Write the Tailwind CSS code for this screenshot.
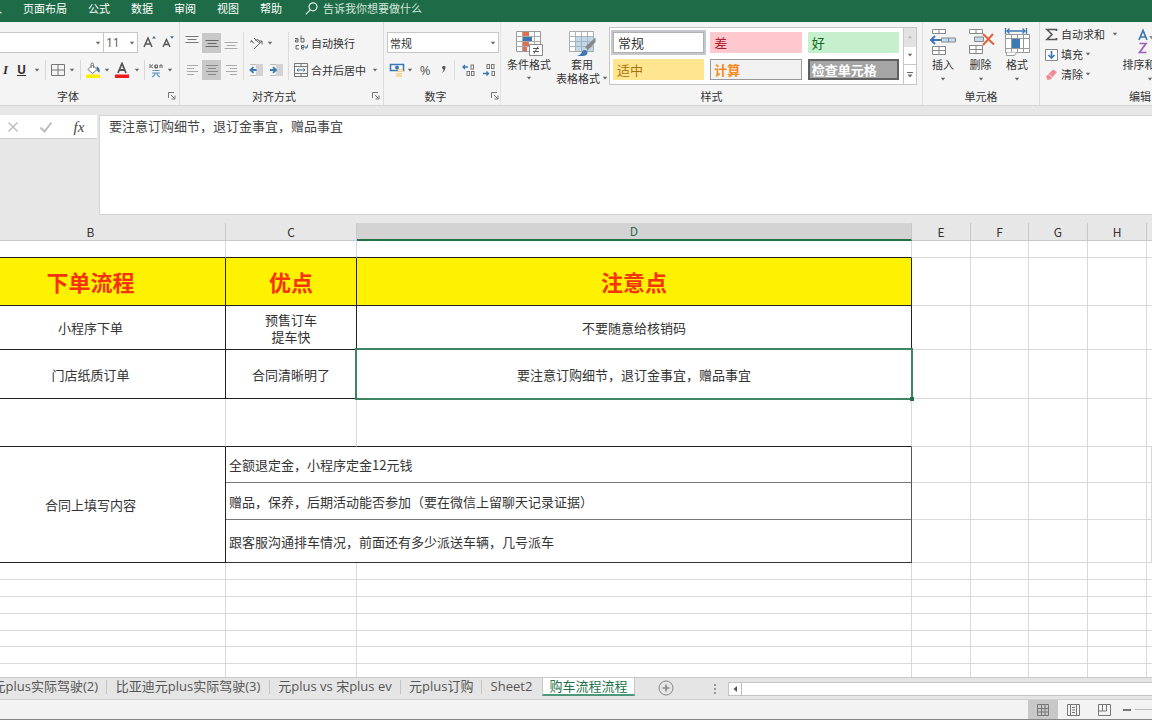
<!DOCTYPE html>
<html lang="zh-CN">
<head>
<meta charset="utf-8">
<title>购车流程流程</title>
<script src="https://cdn.jsdelivr.net/npm/@tailwindcss/browser@4"></script>
</head>
<body class="flex h-screen flex-col overflow-hidden bg-[#e7e7e7] font-['Noto_Sans_CJK_SC',sans-serif] text-[11px] leading-4 text-[#333]">

<svg class="hidden">
  <symbol id="caret" viewBox="0 0 6 4"><path d="M.8.8h4.4L3 3.4z" fill="#666"/></symbol>
  <symbol id="launcher" viewBox="0 0 8 8"><path d="M.5 6V.5H6M3 3l3.5 3.5M7 3.5V7H3.5" fill="none" stroke="#777"/></symbol>
</svg>

<!-- Menu tabs -->
<nav class="flex h-[22px] shrink-0 items-start gap-[21px] overflow-hidden bg-[#1e6c47] text-white">
  <a href="#" class="flex w-[2px] justify-end overflow-hidden whitespace-nowrap">插入</a>
  <a href="#">页面布局</a>
  <a href="#">公式</a>
  <a href="#">数据</a>
  <a href="#">审阅</a>
  <a href="#">视图</a>
  <a href="#">帮助</a>
  <button class="flex items-center gap-[5px] pl-[2px] text-[#d5e6dc]">
    <svg class="size-[13px]" viewBox="0 0 13 13" fill="none" stroke="#e4efe9" stroke-width="1.2"><circle cx="8" cy="4.8" r="4"/><path d="M5.2 7.8L.8 12.4"/></svg>
    <span>告诉我你想要做什么</span>
  </button>
</nav>

<!-- Ribbon -->
<header class="flex h-[84px] shrink-0 overflow-hidden border-b border-[#d6d6d6] bg-[#f4f4f4]">

  <section class="flex w-[180px] shrink-0 flex-col border-r border-[#dcdcdc] pt-[10px]" aria-label="字体">
    <div class="flex h-[21px] items-center">
      <select aria-label="字体名称" class="h-[21px] w-[104px] appearance-none border border-l-0 border-[#c6c6c6] bg-white"><option></option></select>
      <svg class="-ml-[9px] h-1 w-1.5"><use href="#caret"/></svg>
      <select aria-label="字号" class="ml-[2px] h-[21px] w-[35px] appearance-none border border-[#c6c6c6] bg-white px-[2px] font-['Open_Sans',sans-serif] text-[12px] text-[#555]"><option>11</option></select>
      <svg class="-ml-[9px] h-1 w-1.5"><use href="#caret"/></svg>
      <button aria-label="增大字号" class="ml-[6px] w-[18px]"><svg class="h-4 w-[18px]" viewBox="0 0 18 16" fill="none" stroke="#555" stroke-width="1.5"><path d="M3 12L7 3 11 12M4.500 9h5"/><path d="M11 3.500L13 1l2 2.500z" fill="#4a6b8a" stroke="none"/></svg></button>
      <button aria-label="减小字号" class="w-[18px]"><svg class="h-4 w-[18px]" viewBox="0 0 18 16" fill="none" stroke="#555" stroke-width="1.400"><path d="M4 12L7.500 4.500 11 12M5.200 9.500h4.600"/><path d="M11 1.200h4L13 3.700z" fill="#4a6b8a" stroke="none"/></svg></button>
    </div>
    <div class="mt-[7px] flex h-[20px] items-center">
      <button class="w-[11px] font-['Liberation_Serif',serif] text-[13px] font-bold italic">I</button>
      <button class="w-[21px] font-['Open_Sans',sans-serif] text-[12px] font-bold underline">U</button>
      <button aria-label="下划线选项" class="flex w-[10px] justify-center"><svg class="h-1 w-1.5"><use href="#caret"/></svg></button>
      <span class="mx-[3px] h-5 w-px bg-[#d8d8d8]"></span>
      <button aria-label="边框" class="flex w-[18px] justify-center"><svg class="size-[14px]" viewBox="0 0 14 14" fill="none" stroke="#777"><path d="M.5 1.500h13v11H.5zM7 1.500v11M.5 7h13"/></svg></button>
      <button aria-label="边框选项" class="flex w-[10px] justify-center"><svg class="h-1 w-1.5"><use href="#caret"/></svg></button>
      <span class="mx-[3px] h-5 w-px bg-[#d8d8d8]"></span>
      <button aria-label="填充颜色" class="flex w-[18px] justify-center"><svg class="size-4" viewBox="0 0 16 16" fill="none"><path d="M3 7.500L7.500 3l4.500 4.500-4.500 4-4.500-4z" fill="#fff" stroke="#777"/><path d="M6 6V2.500Q6 1 7.200 1t1.300 1.500V6" stroke="#777"/><path d="M11.500 4.500q4 1 3 6-3-.500-3-6z" fill="#44749f"/><path d="M1 12.500h14V16H1z" fill="#fff000"/></svg></button>
      <button aria-label="填充颜色选项" class="flex w-[10px] justify-center"><svg class="h-1 w-1.5"><use href="#caret"/></svg></button>
      <button aria-label="字体颜色" class="flex w-[20px] justify-center"><svg class="size-4" viewBox="0 0 16 16" fill="none"><path d="M4 11L8 1.500 12 11M5.500 8h5" stroke="#555" stroke-width="1.800"/><path d="M1 12.500h14V16H1z" fill="#f01818"/></svg></button>
      <button aria-label="字体颜色选项" class="flex w-[10px] justify-center"><svg class="h-1 w-1.5"><use href="#caret"/></svg></button>
      <span class="mx-[2px] h-5 w-px bg-[#d8d8d8]"></span>
      <button aria-label="拼音指南" class="flex w-[18px] justify-center"><svg class="size-4" viewBox="0 0 16 16" fill="none"><path d="M2 2v4M5 2.500L2.500 4.500 5 6M7 5.500h2.500V3H7zM7 3v3h2.500M12 6V3h2v3" stroke="#666"/><path d="M4.500 8.500h7M4 11h8M7 11q0 3-3 4M9 11q0 3 3 4" stroke="#5b93c4" stroke-width="1.200"/></svg></button>
      <button aria-label="拼音选项" class="flex w-[10px] justify-center"><svg class="h-1 w-1.5"><use href="#caret"/></svg></button>
    </div>
    <div class="mt-[8px] flex items-center pr-[3px]">
      <h2 class="flex-1 pr-[32px] text-center">字体</h2>
      <button aria-label="字体设置"><svg class="size-2"><use href="#launcher"/></svg></button>
    </div>
  </section>

  <section class="flex w-[204px] shrink-0 flex-col border-r border-[#dcdcdc] pt-[10px]" aria-label="对齐方式">
    <div class="flex">
      <div class="flex flex-col gap-[7px] pl-[2px]">
        <div class="flex h-[21px] items-center">
          <button aria-label="顶端对齐" class="flex h-5 w-5 justify-center"><svg class="h-5 w-[14px]" viewBox="0 0 14 20" stroke="#777"><path d="M.5 3.500h13M2.500 6.500h9M.5 9.500h13"/></svg></button>
          <button aria-label="垂直居中" class="flex h-5 w-[19px] justify-center bg-[#c8c8c8]"><svg class="h-5 w-[14px]" viewBox="0 0 14 20" stroke="#666"><path d="M.5 7.500h13M2.500 10.500h9M.5 13.500h13"/></svg></button>
          <button aria-label="底端对齐" class="flex h-5 w-5 justify-center"><svg class="h-5 w-[14px]" viewBox="0 0 14 20" stroke="#aaa"><path d="M.5 9.500h13M2.500 12.500h9M.5 15.500h13"/></svg></button>
        </div>
        <div class="flex h-[20px] items-center">
          <button aria-label="左对齐" class="flex h-5 w-5 justify-center"><svg class="h-5 w-[11px]" viewBox="0 0 11 20" stroke="#aaa"><path d="M0 5.500h11M0 8.500h7M0 11.500h11M0 14.500h7"/></svg></button>
          <button aria-label="居中" class="flex h-5 w-[19px] justify-center bg-[#c8c8c8]"><svg class="h-5 w-[14px]" viewBox="0 0 14 20" stroke="#888"><path d="M1 5.500h12M3 8.500h8M1 11.500h12M3 14.500h8"/></svg></button>
          <button aria-label="右对齐" class="flex h-5 w-5 justify-center"><svg class="h-5 w-[11px]" viewBox="0 0 11 20" stroke="#aaa"><path d="M0 5.500h11M4 8.500h7M0 11.500h11M4 14.500h7"/></svg></button>
        </div>
      </div>
      <span class="mx-[2px] h-12 w-px bg-[#dcdcdc]"></span>
      <div class="flex w-[40px] flex-col gap-[7px]">
        <div class="flex h-[21px] items-center">
          <button aria-label="方向" class="flex w-5 justify-center"><svg class="size-4" viewBox="0 0 16 16" fill="none" stroke="#666"><path d="M3 5l3 3.500M2 7.500q1-2 3-.500M6 3l4 4M7.500 6q1-2.500 3-1t0 3M6 14L14 6M14 6v3.500M14 6h-3"/></svg></button>
          <button aria-label="方向选项" class="flex w-[8px] justify-center"><svg class="h-1 w-1.5"><use href="#caret"/></svg></button>
        </div>
        <div class="flex h-[20px] items-center">
          <button aria-label="减少缩进量" class="flex w-5 justify-center"><svg class="size-[14px]" viewBox="0 0 14 14" fill="none"><path d="M7 1h7v12H7z" fill="#d2d2d2"/><path d="M1 1.500h6M1 12.500h6" stroke="#bbb"/><path d="M7.500 7H2M4.500 4.200L1.500 7l3 2.800" stroke="#3c78b4" stroke-width="1.800"/></svg></button>
          <button aria-label="增加缩进量" class="flex w-5 justify-center"><svg class="size-[14px]" viewBox="0 0 14 14" fill="none"><path d="M7 1h7v12H7z" fill="#d2d2d2"/><path d="M1 1.500h6M1 12.500h6" stroke="#bbb"/><path d="M1 7h5.500M4 4.200L7 7 4 9.800" stroke="#3c78b4" stroke-width="1.800"/></svg></button>
        </div>
      </div>
      <span class="mx-[2px] h-12 w-px bg-[#dcdcdc]"></span>
      <div class="flex flex-1 flex-col gap-[7px] pl-[2px]">
        <button class="flex h-[21px] items-center gap-[2px]">
          <svg class="size-4" viewBox="0 0 16 16" fill="none" stroke="#666"><path d="M2 3.500h3V7H2.500V5H5M8 .5V7h3V3.500H8M6 10.500H3V14h3"/><path d="M8 12.500h3V10.500H8.500V14H11"/><path d="M12.500 12.500h2v-3M13.500 11l-1.500 1.500 1.500 1.500" stroke="#4d86bb"/></svg>
          <span>自动换行</span>
        </button>
        <div class="flex h-[20px] items-center">
          <button class="flex items-center gap-[2px]">
            <svg class="size-4" viewBox="0 0 16 16" fill="none" stroke="#777"><path d="M1.500 1.500h13v13h-13zM1.500 4.500h13M1.500 11.500h13M8 1.500v3M8 11.500v3"/><path d="M4 8h8M5.500 6.500L4 8l1.500 1.500M10.500 6.500L12 8l-1.500 1.500" stroke="#44749f"/></svg>
            <span>合并后居中</span>
          </button>
          <button aria-label="合并选项" class="ml-[4px] flex w-[10px] justify-center"><svg class="h-1 w-1.5"><use href="#caret"/></svg></button>
        </div>
      </div>
    </div>
    <div class="mt-[8px] flex items-center pr-[3px]">
      <h2 class="flex-1 pr-[4px] text-center">对齐方式</h2>
      <button aria-label="对齐设置"><svg class="size-2"><use href="#launcher"/></svg></button>
    </div>
  </section>

  <section class="flex w-[117px] shrink-0 flex-col border-r border-[#e4e4e4] pt-[10px]" aria-label="数字">
    <div class="flex h-[21px] items-center pl-[3px]">
      <select aria-label="数字格式" class="h-[21px] w-[112px] appearance-none border border-[#c6c6c6] bg-white px-[2px]"><option>常规</option></select>
      <svg class="-ml-[9px] h-1 w-1.5"><use href="#caret"/></svg>
    </div>
    <div class="mt-[7px] flex h-[20px] items-center pl-[4px]">
      <button aria-label="会计数字格式" class="flex w-[18px] justify-center"><svg class="size-4" viewBox="0 0 16 16" fill="none"><path d="M1.500 2.500h13v6h-13z" fill="#fff" stroke="#3c78b4" stroke-width="1.600"/><circle cx="8" cy="5.500" r="2" fill="#3c78b4"/><path d="M9 7h5v3H9zM7 11h6v3.500H7z" fill="#f5cd7c"/><path d="M9 8.500h5M7 12.500h6" stroke="#fff" stroke-width=".6"/></svg></button>
      <button aria-label="会计格式选项" class="flex w-[8px] justify-center"><svg class="h-1 w-1.5"><use href="#caret"/></svg></button>
      <button class="w-[22px] font-['Open_Sans',sans-serif] text-[13px] text-[#555]">%</button>
      <button aria-label="千位分隔样式" class="flex w-[16px] justify-center"><svg class="h-3 w-2" viewBox="0 0 8 12"><path d="M5.500 2.800q0 4-3.500 6.200 1.500-2 1.500-3.700Q1.800 4.900 2 3.300 2.500 1.800 4 1.900q1.400.1 1.500.9z" fill="#555"/></svg></button>
      <span class="mx-[2px] h-5 w-px bg-[#dcdcdc]"></span>
      <button aria-label="增加小数位数" class="flex w-[24px] justify-center"><svg class="size-[14px]" viewBox="0 0 14 14" fill="none"><path d="M1 4h5M3 2L1 4l2 2" stroke="#3c78b4" stroke-width="1.400"/><rect x="9" y="2" width="2.500" height="4" stroke="#777"/><rect x="5" y="8.500" width="2.500" height="4" stroke="#777"/><rect x="9.500" y="8.500" width="2.500" height="4" stroke="#777"/></svg></button>
      <button aria-label="减少小数位数" class="flex w-[16px] justify-center"><svg class="size-[14px]" viewBox="0 0 14 14" fill="none"><rect x="5" y="1.500" width="2.500" height="4" stroke="#777"/><rect x="9.500" y="1.500" width="2.500" height="4" stroke="#777"/><rect x="10" y="8.500" width="2.500" height="4" stroke="#777"/><path d="M1 10.500h5.500M4.500 8.500l2 2-2 2" stroke="#3c78b4" stroke-width="1.400"/></svg></button>
    </div>
    <div class="mt-[8px] flex items-center pr-[1px]">
      <h2 class="flex-1 pr-[4px] text-center">数字</h2>
      <button aria-label="数字设置"><svg class="size-2"><use href="#launcher"/></svg></button>
    </div>
  </section>

  <section class="flex w-[422px] shrink-0 flex-col border-r border-[#e0e0e0] pt-[5px]" aria-label="样式">
    <div class="flex h-[61px]">
      <button class="flex w-[54px] flex-col items-center pt-px pl-[2px] leading-[14px]">
        <svg class="h-[29px] w-7" viewBox="0 0 28 29" fill="none"><path d="M1.500 3.500h24v20h-24z" fill="#fff" stroke="#999"/><path d="M8 4h6v5H8zM8 19h4v4H8z" fill="#e0704c"/><path d="M8 9h9v5H8z" fill="#4076b4"/><path d="M8 14h6v5H8z" fill="#e0704c"/><path d="M1.500 8.500h24M1.500 13.500h24M1.500 18.500h24M7.500 3.500v20M19.500 3.500v20" stroke="#aaa"/><path d="M14.500 16.500h13v11h-13z" fill="#fff" stroke="#888"/><path d="M18 20.500h6M18 23.500h6M23 18.500L19 25.500" stroke="#555"/></svg>
        <span>条件格式</span>
        <svg class="mt-[5px] h-1 w-1.5"><use href="#caret"/></svg>
      </button>
      <button class="flex w-[54px] flex-col items-center pt-px leading-[14px] whitespace-nowrap">
        <svg class="h-[29px] w-7" viewBox="0 0 28 29" fill="none"><path d="M1.500 3.500h24v20h-24z" fill="#fff" stroke="#aaa"/><path d="M8 9h17v14H8z" fill="#c0d8ea"/><path d="M1.500 8.500h24M1.500 13.500h24M1.500 18.500h24M7.500 3.500v20M13.500 3.500v20M19.500 3.500v20" stroke="#a8b4bd"/><path d="M27.500 9.500V14l-7.500 8-3-3z" fill="#888"/><path d="M9 28q5-2 5.500-5.500 4-1.500 5 1.500 0 4-5 4z" fill="#3c78b4"/></svg>
        <span>套用</span>
        <span class="flex items-center gap-[2px]">表格格式<svg class="h-1 w-1.5"><use href="#caret"/></svg></span>
      </button>
      <div class="mr-[5px] flex h-[58px] flex-1 border border-[#c6c6c6] bg-white text-[13px] leading-[19px]">
        <div class="grid flex-1 grid-cols-3 gap-[6px] py-[4px] pr-[4px] pl-[3px]">
          <button class="border border-[#b0b0b0] pl-[4px] text-left outline-2 outline-[#c4c8cc]">常规</button>
          <button class="bg-[#ffc7ce] pl-[4px] text-left text-[#b0202c]">差</button>
          <button class="bg-[#c6efce] pl-[4px] text-left text-[#146a1c]">好</button>
          <button class="bg-[#ffe58f] pl-[4px] text-left text-[#a87408]">适中</button>
          <button class="border border-[#999] bg-[#f2f2f2] pl-[3px] text-left font-bold text-[#f58a1c]">计算</button>
          <button class="border-2 border-[#606060] bg-[#a5a5a5] pl-[2px] text-left leading-[17px] font-bold text-white">检查单元格</button>
        </div>
        <div class="grid w-[13px] grid-rows-3 border-l border-[#c6c6c6]">
          <button aria-label="上一行" class="flex items-center justify-center bg-[#e2e2e2]"><svg class="h-1 w-1.5 rotate-180 opacity-30"><use href="#caret"/></svg></button>
          <button aria-label="下一行" class="flex items-center justify-center border-b border-[#c6c6c6]"><svg class="h-1 w-1.5"><use href="#caret"/></svg></button>
          <button aria-label="其他" class="flex items-center justify-center"><svg class="h-2 w-1.5" viewBox="0 0 6 8"><path d="M0 1.500h6" stroke="#666"/><path d="M.5 3.500h5L3 6.500z" fill="#666"/></svg></button>
        </div>
      </div>
    </div>
    <h2 class="text-center">样式</h2>
  </section>

  <section class="flex w-[117px] shrink-0 flex-col border-r border-[#dcdcdc] pt-[5px]" aria-label="单元格">
    <div class="flex h-[61px] pl-px">
      <button class="flex w-[38px] flex-col items-center pt-px leading-[14px]">
        <svg class="h-[29px] w-7" viewBox="0 0 28 29" fill="none" stroke="#888"><path d="M3.500 1.500h13v4h-13zM10 1.500v4M3.500 18.500h13v8h-13zM10 18.500v8M3.500 22.500h13" fill="#fff"/><path d="M12.500 10h14v4h-14zM19.500 10v4" fill="#c3dcee"/><path d="M12 12H2M6 8L2 12l4 4" stroke="#3c78b4" stroke-width="2"/></svg>
        <span>插入</span>
        <svg class="mt-[6px] h-1 w-1.5"><use href="#caret"/></svg>
      </button>
      <button class="flex w-[37px] flex-col items-center pt-px leading-[14px]">
        <svg class="h-[29px] w-7" viewBox="0 0 28 29" fill="none" stroke="#888"><path d="M2.500 1.500h13v4h-13zM9 1.500v4M2.500 17.500h13v8h-13zM9 17.500v8M2.500 21.500h13" fill="#fff"/><path d="M7.500 9h9v4.500h-9z" fill="#c3dcee"/><path d="M16 6l11 10.500M26 6L16 17" stroke="#e0623f" stroke-width="2"/></svg>
        <span>删除</span>
        <svg class="mt-[6px] h-1 w-1.5"><use href="#caret"/></svg>
      </button>
      <button class="flex w-[36px] flex-col items-center pt-px leading-[14px]">
        <svg class="h-[29px] w-7" viewBox="0 0 28 29" fill="none" stroke="#999"><path d="M2.500 6.500h24v18h-24zM2.500 10.500h24M2.500 20.500h24M8.500 6.500v18M20.500 6.500v18M14.500 6.500v18" fill="#fff"/><path d="M3.500 24.500v3h8l2-3" fill="#fff"/><path d="M9 11h8v9H9z" fill="#3c78b4" stroke="none"/><path d="M4 3h18M6.500.5L4 3l2.500 2.500M19.500.5L22 3l-2.500 2.500M2.500 0v6M23.500 0v6" stroke="#3c78b4" stroke-width="1.300"/></svg>
        <span>格式</span>
        <svg class="mt-[6px] h-1 w-1.5"><use href="#caret"/></svg>
      </button>
    </div>
    <h2 class="text-center">单元格</h2>
  </section>

  <section class="flex w-[200px] shrink-0 flex-col pt-[2px]" aria-label="编辑">
    <div class="flex h-[64px]">
      <div class="flex w-[80px] flex-col pl-[5px]">
        <button class="flex h-5 items-center gap-[3px]">
          <svg class="size-[13px]" viewBox="0 0 13 13" fill="none" stroke="#555" stroke-width="1.600"><path d="M11.500 3V1.500H2L7 6.500l-5 5h9.500V10"/></svg>
          <span>自动求和</span>
          <svg class="ml-[4px] h-1 w-1.5"><use href="#caret"/></svg>
        </button>
        <button class="flex h-5 items-center gap-[3px]">
          <svg class="size-[13px]" viewBox="0 0 13 13" fill="none"><path d="M.5 1.500h12v11H.5z" fill="#fff" stroke="#888"/><path d="M6.500 3v7M3.500 7l3 3 3-3" stroke="#3c78b4" stroke-width="1.700"/></svg>
          <span class="flex items-center">填充<svg class="ml-[2px] h-1 w-1.5"><use href="#caret"/></svg></span>
        </button>
        <button class="flex h-5 items-center gap-[3px]">
          <svg class="size-[13px]" viewBox="0 0 13 13"><path d="M1 8.500l7-7 4 2.500-6.500 7.500-3 .5z" fill="#ee8b97"/><path d="M3.500 6l4 3.300" stroke="#fff" stroke-width=".8"/></svg>
          <span class="flex items-center">清除<svg class="ml-[2px] h-1 w-1.5"><use href="#caret"/></svg></span>
        </button>
      </div>
      <button class="flex w-[60px] flex-col items-center pt-[4px] leading-[14px]">
        <svg class="h-[29px] w-7" viewBox="0 0 28 29" fill="none" stroke-width="1.700"><path d="M3 12L7 2.500 11 12M4.500 9h5" stroke="#3c78b4"/><path d="M3.500 15.500H10L3.500 24.500h7" stroke="#9a62b8"/><path d="M13 8h14l-5.500 6.500V22l-3-2v-5.500z" fill="#888"/></svg>
        <span>排序和筛选</span>
        <svg class="mt-[6px] h-1 w-1.5"><use href="#caret"/></svg>
      </button>
    </div>
    <h2 class="text-center">编辑</h2>
  </section>
</header>

<!-- Formula bar -->
<div class="mt-[9px] flex h-[100px] shrink-0 items-start">
  <div class="flex h-6 w-[97px] items-center border-b border-[#d0d0d0] bg-white">
    <button aria-label="取消" class="flex w-[26px] justify-center"><svg class="size-3" viewBox="0 0 12 12" stroke="#bbb" stroke-width="1.400"><path d="M1.500 1.500l9 9M10.500 1.500l-9 9"/></svg></button>
    <button aria-label="输入" class="flex w-[40px] justify-center"><svg class="h-3 w-[14px]" viewBox="0 0 14 12" fill="none" stroke="#bbb" stroke-width="2"><path d="M1.500 6.500l4 4 7-9"/></svg></button>
    <button aria-label="插入函数" class="w-[26px] font-['Liberation_Serif',serif] text-[15px] text-[#444] italic">fx</button>
  </div>
  <textarea aria-label="编辑栏" class="ml-[2px] h-full flex-1 resize-none border border-r-0 border-[#d4d4d4] bg-white px-[9px] text-[13px] leading-5 text-[#444]">要注意订购细节，退订金事宜，赠品事宜</textarea>
</div>

<!-- Worksheet -->
<main class="mt-[8px] min-h-0 flex-1 overflow-hidden bg-white">
  <table class="w-full table-fixed border-separate border-spacing-0 text-center text-[13px] leading-[17px] text-[#333] [&_td]:border-r [&_td]:border-b [&_td]:border-[#d9d9d9] [&_td]:p-0 [&_td:nth-child(8)]:border-r-0 [&_th]:p-0">
    <colgroup>
      <col class="w-[226px]"><col class="w-[131px]"><col class="w-[555px]"><col class="w-[59px]"><col class="w-[58px]"><col class="w-[59px]"><col class="w-[59px]"><col>
    </colgroup>
    <thead>
      <tr class="h-[18px] bg-[#e7e7e7] text-[12px] leading-4 [&>th]:border-r [&>th]:border-b [&>th]:border-[#c8c8c8] [&>th]:font-normal">
        <th scope="col" class="pr-[44px]!">B</th>
        <th scope="col">C</th>
        <th scope="col" class="border-b-2! border-b-[#217346]! bg-[#d3d3d3] text-[#2f6b50]">D</th>
        <th scope="col">E</th><th scope="col">F</th><th scope="col">G</th><th scope="col">H</th><th scope="col" class="border-r-0!"></th>
      </tr>
    </thead>
    <tbody>
      <tr class="h-[17px] [&>td:nth-child(-n+3)]:border-b-[#222]"><td></td><td></td><td></td><td></td><td></td><td></td><td></td><td></td></tr>
      <tr class="h-[48px] [&>td:nth-child(-n+3)]:border-[#222] [&>td:nth-child(-n+3)]:bg-[#fff200] [&>td:nth-child(-n+3)]:pb-[2px] [&>td:nth-child(-n+3)]:text-[22px] [&>td:nth-child(-n+3)]:leading-8 [&>td:nth-child(-n+3)]:font-bold [&>td:nth-child(-n+3)]:text-[#f5330c]">
        <td class="pr-[44px]!">下单流程</td><td>优点</td><td>注意点</td><td></td><td></td><td></td><td></td><td></td>
      </tr>
      <tr class="h-[44px] [&>td:nth-child(-n+3)]:border-[#222]">
        <td class="pr-[44px]!">小程序下单</td><td>预售订车<br>提车快</td><td>不要随意给核销码</td><td></td><td></td><td></td><td></td><td></td>
      </tr>
      <tr class="h-[49px] [&>td:nth-child(-n+3)]:border-[#222]">
        <td class="pr-[44px]!">门店纸质订单</td><td>合同清晰明了</td>
        <td class="relative">要注意订购细节，退订金事宜，赠品事宜
          <span class="pointer-events-none absolute -inset-[2px] border-2 border-[#3f8465]"></span>
          <span class="absolute -right-[3px] -bottom-[3px] size-1 bg-[#217346]"></span>
        </td>
        <td></td><td></td><td></td><td></td><td></td>
      </tr>
      <tr class="h-[48px] [&>td:nth-child(-n+3)]:border-b-[#222]"><td></td><td></td><td></td><td></td><td></td><td></td><td></td><td></td></tr>
      <tr class="h-[36px]">
        <td rowspan="3" class="border-[#222]! pr-[44px]!">合同上填写内容</td>
        <td colspan="2" class="border-r-[#555]! border-b-[#777]! pl-[3px]! text-left">全额退定金，小程序定金12元钱</td><td></td><td></td><td></td><td></td><td></td>
      </tr>
      <tr class="h-[37px]"><td colspan="2" class="border-r-[#555]! border-b-[#777]! pl-[3px]! text-left">赠品，保养，后期活动能否参加（要在微信上留聊天记录证据）</td><td></td><td></td><td></td><td></td><td></td></tr>
      <tr class="h-[43px]"><td colspan="2" class="border-r-[#555]! border-b-[#333]! pl-[3px]! text-left">跟客服沟通排车情况，前面还有多少派送车辆，几号派车</td><td></td><td></td><td></td><td></td><td></td></tr>
      <tr class="h-[17px]"><td></td><td></td><td></td><td></td><td></td><td></td><td></td><td></td></tr>
      <tr class="h-[17px]"><td></td><td></td><td></td><td></td><td></td><td></td><td></td><td></td></tr>
      <tr class="h-[17px]"><td></td><td></td><td></td><td></td><td></td><td></td><td></td><td></td></tr>
      <tr class="h-[17px]"><td></td><td></td><td></td><td></td><td></td><td></td><td></td><td></td></tr>
      <tr class="h-[16px]"><td></td><td></td><td></td><td></td><td></td><td></td><td></td><td></td></tr>
      <tr class="h-[17px]"><td></td><td></td><td></td><td></td><td></td><td></td><td></td><td></td></tr>
      <tr class="h-[17px]"><td></td><td></td><td></td><td></td><td></td><td></td><td></td><td></td></tr>
    </tbody>
  </table>
</main>

<!-- Sheet tabs -->
<div class="flex h-[22px] shrink-0 items-start border-t border-[#c8c8c8] bg-[#e5e5e5] font-['Open_Sans','Noto_Sans_CJK_SC',sans-serif] text-[13px] text-[#555]">
  <button class="flex w-[98px] justify-end overflow-hidden leading-4 whitespace-nowrap">元plus实际驾驶(2)</button>
  <span class="mx-[8px] mt-[2px] h-[14px] w-px bg-[#c4c4c4]"></span>
  <button class="w-[146px] leading-4 whitespace-nowrap">比亚迪元plus实际驾驶(3)</button>
  <span class="mx-[8px] mt-[2px] h-[14px] w-px bg-[#c4c4c4]"></span>
  <button class="w-[114px] leading-4 whitespace-nowrap">元plus vs 宋plus ev</button>
  <span class="mx-[8px] mt-[2px] h-[14px] w-px bg-[#c4c4c4]"></span>
  <button class="w-[64px] leading-4 whitespace-nowrap">元plus订购</button>
  <span class="mx-[8px] mt-[2px] h-[14px] w-px bg-[#c4c4c4]"></span>
  <button class="w-[43px] leading-4 whitespace-nowrap">Sheet2</button>
  <button class="ml-[9px] w-[93px] border-x border-b-2 border-[#c8c8c8] border-b-[#4d9878] bg-white leading-4 text-[#217346]">购车流程流程</button>
  <button aria-label="新工作表" class="mt-[2px] ml-[23px]"><svg class="size-4" viewBox="0 0 16 16" fill="none" stroke="#888"><circle cx="8" cy="8" r="7"/><path d="M8 4.500v7M4.500 8h7" stroke-width="1.600"/></svg></button>
  <svg class="mt-[5px] ml-[40px] h-3 w-[3px]" viewBox="0 0 3 12" fill="#999"><path d="M0 1h2v2H0zM0 5h2v2H0zM0 9h2v2H0z"/></svg>
  <div class="mt-[4px] ml-[11px] flex h-[14px] flex-1 border border-r-0 border-[#c4c4c4] bg-white">
    <button aria-label="向左滚动" class="flex w-[13px] items-center justify-center border-r border-[#bbb]"><svg class="h-1.5 w-1" viewBox="0 0 4 6"><path d="M4 0v6L.5 3z" fill="#555"/></svg></button>
  </div>
</div>

<!-- Status bar -->
<footer class="flex h-[21px] shrink-0 items-stretch border-t border-b border-t-[#d0d0d0] border-b-[#858585] bg-[#f3f3f3]">
  <span class="flex-1"></span>
  <button aria-label="普通" class="flex w-[30px] items-center justify-center bg-[#c8c8c8]"><svg class="size-3" viewBox="0 0 12 12" fill="none" stroke="#777"><path d="M.5.5h11v11H.5zM4.500.5v11M8 .5v11M.5 4.500h11M.5 8h11"/></svg></button>
  <button aria-label="页面布局" class="flex w-[31px] items-center justify-center"><svg class="h-3 w-[13px]" viewBox="0 0 13 12" fill="none" stroke="#777"><path d="M.5.500h12v11H.5zM3.500.5v11M9.500.5v11M5 3.500h3M5 6h3M5 8.500h3"/></svg></button>
  <button aria-label="分页预览" class="flex w-[30px] items-center justify-center"><svg class="h-3 w-[13px]" viewBox="0 0 13 12" fill="none" stroke="#777"><path d="M.5.5h12v11H.5zM4.500.5V7H.5M8.500.5V7M4.500 7h4"/></svg></button>
  <button aria-label="缩小" class="flex w-[16px] items-center justify-center"><svg class="h-[2px] w-2"><path d="M0 1h8" stroke="#777" stroke-width="2"/></svg></button>
  <span class="my-auto h-px w-[17px] bg-[#bbb]"></span>
</footer>
</body>
</html>
